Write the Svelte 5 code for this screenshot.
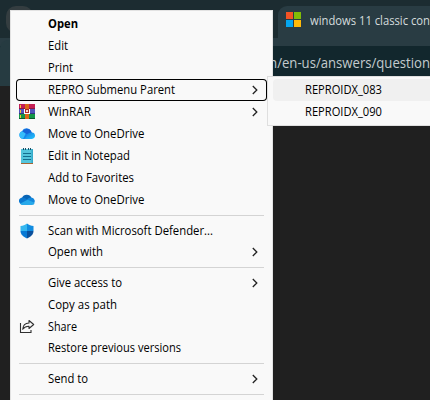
<script>
  const groups = [
    [
      { label: 'Open', w: 30, bold: true },
      { label: 'Edit', w: 20 },
      { label: 'Print', w: 25 },
      { label: 'REPRO Submenu Parent', w: 127, arrow: true, focus: true },
      { label: 'WinRAR', w: 43, arrow: true, icon: 'rar' },
      { label: 'Move to OneDrive', w: 96.5, icon: 'cloud' },
      { label: 'Edit in Notepad', w: 82, icon: 'note' },
      { label: 'Add to Favorites', w: 86 },
      { label: 'Move to OneDrive', w: 96.5, icon: 'cloud2' },
    ],
    [
      { label: 'Scan with Microsoft Defender...', w: 165, icon: 'shield', h: 21 },
      { label: 'Open with', w: 55, arrow: true },
    ],
    [
      { label: 'Give access to', w: 74, arrow: true },
      { label: 'Copy as path', w: 69 },
      { label: 'Share', w: 29, icon: 'share', h: 21 },
      { label: 'Restore previous versions', w: 133 },
    ],
    [{ label: 'Send to', w: 40, arrow: true }],
    [],
  ];
  const sub = ['REPROIDX_083', 'REPROIDX_090'];
</script>

{#snippet text(label, w, bold = false)}
  <svg class="label" width={w + 2} height="21"><text class:bold x="0" y="15" textLength={w} lengthAdjust="spacingAndGlyphs">{label}</text></svg>
{/snippet}

{#snippet icon(name)}
  <svg class="icon" width="16" height="16" viewBox="0 0 16 16">
    {#if name === 'rar'}
      <path fill="#c41f55" d="M0 0h16v5H0z" /><path fill="#8d1742" d="M0 4h16v1H0z" />
      <path fill="#5054bc" d="M0 5h16v5H0z" /><path fill="#33347e" d="M0 9h16v1H0z" />
      <path fill="#159648" d="M0 10h16v5H0z" /><path fill="#0b5a2a" d="M0 14h16v1H0z" />
      <path fill="#f0c43a" d="M1 1h1v3H1zM1 6h1v3H1zM1 11h1v3H1z" />
      <path fill="#dc6817" d="M6 0h4v15H6z" />
      <path fill="#ad2b28" d="M5 5h6v5H5z" /><path fill="#fff" d="M5 5h1v5H5zM10 5h1v5h-1zM6 9h4v1H6z" /><path fill="#f1d6d0" d="M7 6h2v2H7z" />
    {:else if name === 'cloud'}
      <defs><linearGradient id="cg" x1="0" y1="0" x2="1" y2="1"><stop offset="0" stop-color="#1675de" /><stop offset="1" stop-color="#22c4ff" /></linearGradient></defs>
      <path fill="#1685eb" d="M4 13a4 4 0 0 1-1-7.7A5 5 0 0 1 12 5l1 2-7 6z" />
      <path fill="#35bdfb" d="M4 13a4 4 0 0 1-3.500-5C1 5.500 3 5 5 5.300c2 .5 2 2 1 3.700z" />
      <path fill="#1564d8" d="M3.500 5.500a5 5 0 0 1 8.500-.5l.5 2-5 1z" />
      <path fill="url(#cg)" d="M4 13c4 0 3-6.500 8.500-6.500A3.200 3.200 0 0 1 13 13z" />
    {:else if name === 'note'}
      <path fill="#53c5dc" d="M2 1h12v14H2z" /><path fill="#36aac9" d="M12.500 1H14v14h-1.500z" />
      <path fill="#a56635" d="M2 15h12v1H2z" />
      <path stroke="#164f68" d="M4.500 0v2M6.500 0v2M9.500 0v2M11.500 0v2" /><path stroke="#136f8f" d="M4 5.500h8M4 8.500h8M4 11.500h8" />
    {:else if name === 'cloud2'}
      <path fill="#0864b5" d="M3 6a5.200 5.200 0 0 1 9.500-.2L8.500 9z" />
      <path fill="#1287dc" d="M8 8c1-3 6-3.500 7.500 0 1 2-1 4-2 4z" />
      <path fill="#0b78d0" d="M3 12.500A3.600 3.600 0 0 1 1 6.400c2-1.400 4-.9 6 .4l2 1.500z" />
      <path fill="#28a9ea" d="M1 11.800 8.500 7.800l7 3c0 1.400-1 2.200-2.500 2.200H4c-1.200 0-2.300-.4-3-1.200z" />
    {:else if name === 'shield'}
      <path fill="#35b7ef" d="M8 .5v7.500H1.500V3C4 3 6 2 8 .5z" /><path fill="#118ce0" d="M8 .5C10 2 12 3 14.500 3v5H8z" />
      <path fill="#0879d4" d="M1.500 8H8v7.500C4 13.500 1.500 11.500 1.500 8z" /><path fill="#0a509c" d="M8 8h6.500c0 3.500-2.500 5.500-6.500 7.500z" />
    {:else if name === 'share'}
      <g fill="none" stroke="#303030" stroke-width="1.1"><path d="M1.500 4v9.500h10.500V11" /><path stroke-linejoin="round" d="M10 1.500 14.700 5.500 10 9.500V7.300C7 7.200 5.500 8 3.700 10.200 4 6.500 6 4.200 10 4z" /></g>
    {/if}
  </svg>
{/snippet}

<div class="screen">
  <div class="browser">
    <div class="tabs">
      <div class="circle"></div>
      <div class="tab">
        <svg width="15" height="15"><path fill="#f35325" d="M0 0h7v7H0z" /><path fill="#81bc06" d="M8 0h7v7H8z" /><path fill="#05a6f0" d="M0 8h7v7H0z" /><path fill="#ffba08" d="M8 8h7v7H8z" /></svg>
        <svg class="title" width="120" height="20"><text x="0" y="15" textLength="120" lengthAdjust="spacingAndGlyphs">windows 11 classic con</text></svg>
      </div>
    </div>
    <div class="toolbar"><svg width="165" height="30"><text x="0" y="22" textLength="165" lengthAdjust="spacingAndGlyphs">m/en-us/answers/question</text></svg></div>
    <div class="leftbar"></div>
    <svg class="prevtab" width="6" height="38"><path d="M0 0H6V29Q5 36 0 38Z" /></svg>
  </div>

  <div class="menu">
    {#each groups as group, i}
      {#if i}<div class="sep"></div>{/if}
      {#each group as item}
        <div class="row" class:short={item.h === 21} class:focus={item.focus}>
          <span class="slot">{#if item.icon}{@render icon(item.icon)}{/if}</span>
          {@render text(item.label, item.w, item.bold)}
          {#if item.arrow}
            <svg class="arrow" width="6" height="10"><path d="M.8 1 4.800 5 .8 9" /></svg>
          {/if}
        </div>
      {/each}
    {/each}
  </div>

  <div class="submenu">
    {#each sub as label, i}
      <div class="subrow" class:hover={i === 0}>{@render text(label, 77)}</div>
    {/each}
  </div>
</div>

<style>
  :global(body) { margin: 0; background: #202020; }
  .screen { position: relative; width: 430px; height: 400px; overflow: hidden; background: #202020; font-family: 'Open Sans', 'Noto Sans', sans-serif; }
  svg { display: block; flex: none; }
  .tabs { position: relative; height: 46px; background: linear-gradient(#1c2c31 38px, #293c43 38px); display: flex; justify-content: flex-end; }
  .circle { position: absolute; left: 6px; top: 6px; width: 27px; height: 27px; border-radius: 10px; background: #343d40; }
  .tab { box-sizing: border-box; width: 152px; height: 40px; margin-top: 6px; background: #293c43; border-top-left-radius: 9px; display: flex; padding: 6px 0 0 8px; gap: 9px; }
  .title { margin-top: -2px; }
  .title text { font-size: 12px; fill: #d5dcde; }
  .toolbar { height: 30px; background: #12272d; padding-left: 265px; }
  .toolbar text { font-size: 14.5px; fill: #c3cbce; }
  .leftbar { position: absolute; left: 0; top: 40px; width: 30px; height: 46px; background: #263b41; border-top-left-radius: 8px; }
  .prevtab { position: absolute; left: 272px; top: 0; }
  .prevtab path { fill: #1c2c31; }
  .menu { position: absolute; left: 10px; top: 10px; box-sizing: border-box; width: 263px; height: 410px; padding: 2px 5px; border: 1px solid #e2e2e2; background: #f9f9f9; }
  .row { box-sizing: border-box; height: 22px; display: flex; padding-right: 9px; }
  .short { height: 21px; }
  .focus { border-radius: 4px; box-shadow: inset 0 0 0 1px #000; }
  .slot { width: 32px; flex: none; padding: 3px 0 0 3px; box-sizing: border-box; }
  .label text { font-size: 12px; fill: #000; }
  .label .bold { font-weight: 700; }
  .label { overflow: visible; }
  .arrow { margin: 6px 0 0 auto; }
  .arrow path { fill: none; stroke: #222; stroke-width: 1.3; }
  .sep { height: 1px; margin: 4px 3px; background: #d4d4d4; }
  .submenu { position: absolute; left: 267px; top: 76px; box-sizing: border-box; width: 180px; height: 50px; padding: 2px 5px; border: 1px solid #dfdfdf; background: #f9f9f9; }
  .subrow { height: 22px; padding-left: 32px; border-radius: 4px; }
  .hover { background: #f0f0f0; }
</style>
